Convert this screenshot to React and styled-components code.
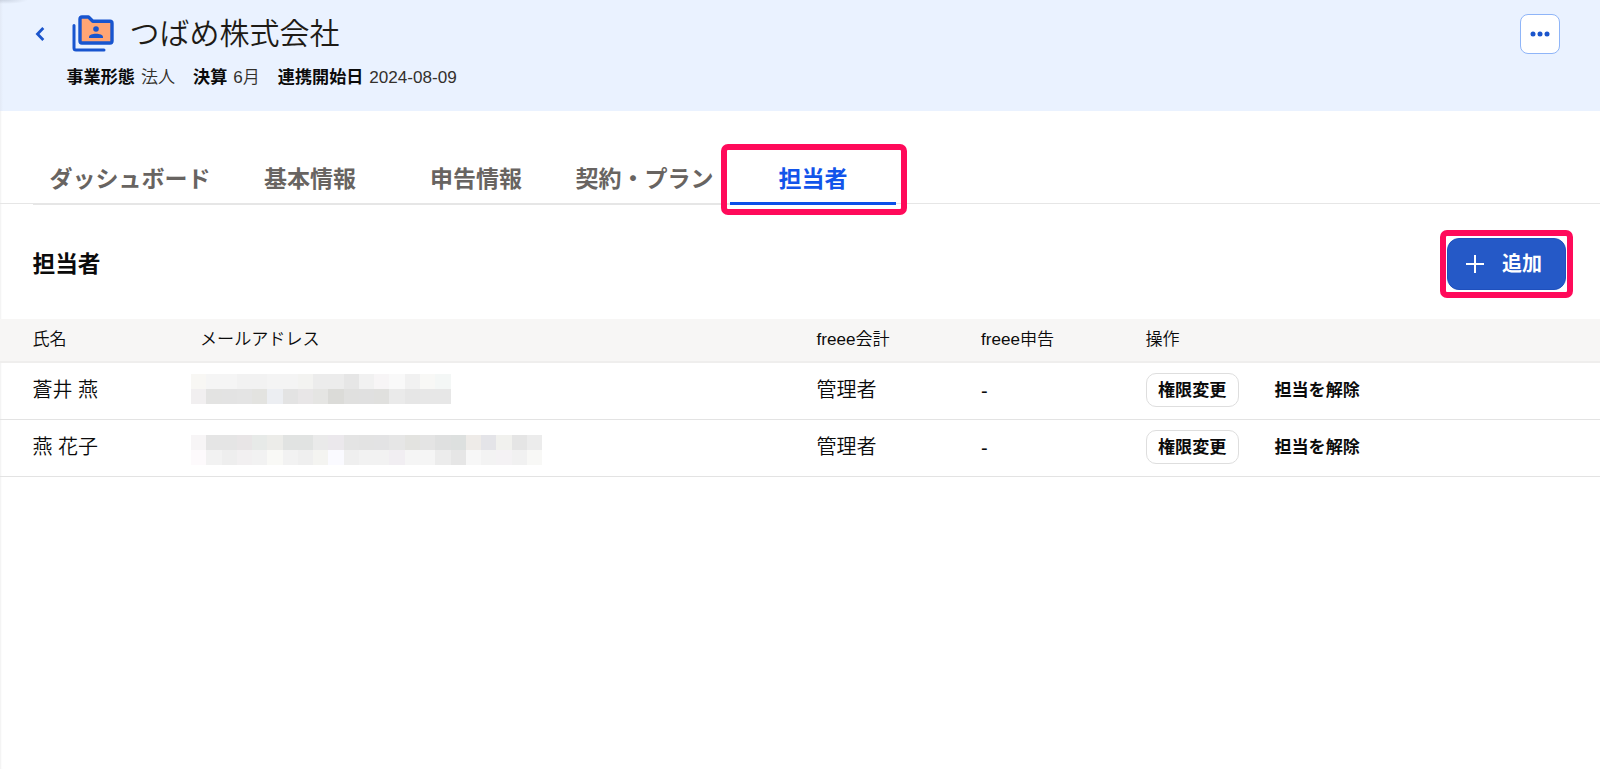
import React from "react";
import styled, { createGlobalStyle } from "styled-components";

const GlobalStyle = createGlobalStyle`
  *, *::before, *::after { box-sizing: border-box; }
  html, body { margin: 0; height: 100%; overflow: hidden; }
  body {
    background: #fff;
    color: #0b0b0b;
    font-family: "Liberation Sans", "Noto Sans CJK JP", sans-serif;
    font-size: 20px;
  }
  button { font: inherit; color: inherit; }
`;

const Page = styled.div`
  display: flex;
  flex-direction: column;
  height: 769px;
  width: 1600px;
  box-shadow: inset 2px 0 2px -1px rgba(0, 0, 0, 0.06);
`;

const Header = styled.header`
  display: flex;
  justify-content: space-between;
  height: 111px;
  padding: 14px 40px 0 34px;
  background:
    radial-gradient(ellipse 24px 4px at 4px 0, rgba(90, 100, 120, 0.2), transparent),
    linear-gradient(90deg, #e3eaf6, transparent 3px),
    #eaf2ff;
`;

const TitleRow = styled.div`
  display: flex;
  align-items: center;
  height: 40px;
`;

const BackButton = styled.button`
  display: flex;
  padding: 0;
  border: 0;
  background: none;
`;

const FolderIcon = styled.svg`
  margin: 0 0 2px 24.5px;
`;

const Title = styled.h1`
  margin: 0 0 1px 15px;
  font-size: 30px;
  font-weight: 350;
  line-height: 40px;
  color: #1e1b16;
`;

const Facts = styled.dl`
  display: flex;
  gap: 18px;
  margin: 12px 0 0 32.5px;
  font-size: 17.1px;
  line-height: 24px;
`;

const Fact = styled.div`
  display: flex;
  gap: 6px;
  dt { font-weight: 700; }
  dd { margin: 0; font-weight: 350; color: #33302c; }
`;

const MoreButton = styled.button`
  display: flex;
  align-items: center;
  justify-content: center;
  width: 40px;
  height: 40px;
  padding: 0;
  border: 1px solid #8fb5f8;
  border-radius: 8px;
  background: #fff;
`;

const TabBar = styled.nav`
  display: flex;
  height: 93px;
  padding: 47px 0 0 33px;
  border-bottom: 1px solid #e6e6e6;
`;

const Tab = styled.a`
  position: relative;
  display: flex;
  justify-content: center;
  min-width: 166px;
  height: 47px;
  padding: 0 16.5px;
  border-bottom: ${(p) => (p.$active ? "3px solid #0c50e8" : "1px solid #e6e6e6")};
  color: ${(p) => (p.$active ? "#1254ea" : "#686461")};
  font-size: 23px;
  font-weight: 700;
  line-height: 43px;
  white-space: nowrap;
`;

const Highlight = styled.span`
  position: absolute;
  inset: ${(p) => p.$inset};
  border: 6px solid #ff0a5a;
  border-radius: 7px;
  pointer-events: none;
`;

const SectionHead = styled.div`
  display: flex;
  align-items: center;
  justify-content: space-between;
  height: 115px;
  padding: 5px 34px 0 32.5px;
`;

const SectionTitle = styled.h2`
  margin: 0;
  font-size: 22.7px;
  line-height: 32px;
`;

const AddButton = styled.button`
  position: relative;
  display: flex;
  align-items: center;
  gap: 18px;
  width: 119px;
  height: 52px;
  padding: 0 0 0 18px;
  border: 1px solid #1f50bd;
  border-radius: 12px;
  background: #2559c7;
  color: #fff;
  font-weight: 700;
`;

const AddLabel = styled.span`
  padding-bottom: 3px;
`;

const grid = `
  display: grid;
  grid-template-columns: 158.5px 625.5px 164.5px 164.5px 1fr;
  align-items: center;
  padding-left: 32.5px;
`;

const TableHead = styled.div`
  ${grid}
  height: 44px;
  padding-bottom: 6px;
  border-bottom: 2px solid #efeeed;
  background: #f7f6f5;
  font-size: 17.1px;
  font-weight: 350;
`;

const HeadCell = styled.span`
  padding-left: ${(p) => p.$indent || 0}px;
`;

const Row = styled.div`
  ${grid}
  height: 57px;
  padding-bottom: 5px;
  border-bottom: 1px solid #e3e3e3;
  font-weight: 350;
`;

const Cell = styled.span`
  padding-top: ${(p) => p.$drop || 0}px;
`;

const Mosaic = styled.div`
  display: grid;
  grid-template-columns: repeat(${(p) => p.$columns}, 15.27px);
  grid-auto-rows: 15.3px;
  margin-top: ${(p) => p.$shift}px;
`;

const Pixel = styled.i`
  background: ${(p) => p.$tone};
`;

const Actions = styled.div`
  display: flex;
  align-items: center;
  gap: 35.5px;
  margin-top: 3px;
`;

const ActionButton = styled.button`
  height: 34px;
  padding: 0 ${(p) => (p.$outlined ? 11.5 : 0)}px 3px;
  border: ${(p) => (p.$outlined ? "1px solid #dedede" : "0")};
  border-radius: 10px;
  background: #fff;
  font-size: 17.1px;
  font-weight: 700;
`;

const tabs = ["ダッシュボード", "基本情報", "申告情報", "契約・プラン", "担当者"];

const members = [
  {
    name: "蒼井 燕",
    role: "管理者",
    shift: 1,
    columns: 17,
    tones:
      "f8f7f4 f5f5f5 f5f5f5 f2f2f2 f2f2f2 f4f4f4 f4f4f4 f3f3f1 ececec ececec e6e6e6 f1f1f1 f7f5f6 f9f9f9 f1f1f1 f8f8f6 f4f7f6 " +
      "f1eff0 e3e3e2 e3e3e3 e4e4e4 e3e3e0 eceef2 e3e3e3 e8e6e7 e5e5e3 dbdbd8 e0e0df e0e0e0 e0e0de eaeaea e6e6e6 e7e7e7 e7e7e7",
  },
  {
    name: "燕 花子",
    role: "管理者",
    shift: 9,
    columns: 23,
    tones:
      "f7f5f6 e5e5e5 e5e5e5 e8e5e6 e7eae8 ecece9 e1e3e2 e1e3e2 eaeaea ebe8ec e4e4e4 e3e3e3 e3e3e4 e6e6e6 e3e3e0 e4e4e4 dfe0e0 dde0df eeebe8 e4e4e8 f1f1ee e5e5e5 ececec " +
      "fdfafc f2f2f2 eeeeee f2f0f1 f2f2f2 f9f9f6 f2f2f2 efefef f4f4f1 fafaff efefef f2f2f2 f2f2f2 f1eef2 f5f5f5 f5f5f5 ececec e6e6e6 f7f7f7 f3f3f3 f4f2f4 f1f1f1 f8f8f6",
  },
];

export default function App() {
  return (
    <Page>
      <GlobalStyle />
      <Header>
        <div>
          <TitleRow>
            <BackButton aria-label="戻る">
              <svg width="12" height="16" viewBox="0 0 12 16" fill="none" stroke="#1b55cc" strokeWidth="2.8">
                <path d="M9.3 2L3.5 8L9.3 14" />
              </svg>
            </BackButton>
            <FolderIcon width="44" height="38" viewBox="0 0 44 38" fill="none" stroke="#1855cf" strokeLinecap="round" strokeLinejoin="round">
              <path d="M3 11.5V34Q3 36 5 36H33" strokeWidth="3" />
              <path d="M9 5Q9 3 11 3H17.5L21.8 7.2H39Q41 7.2 41 9.2V27Q41 29 39 29H11Q9 29 9 27Z" fill="#ffa574" strokeWidth="3.4" />
              <circle cx="25" cy="15" r="2.8" fill="#1855cf" stroke="none" />
              <path d="M18 24V23C18 18.8 32 18.8 32 23V24Z" fill="#1855cf" stroke="none" />
            </FolderIcon>
            <Title>つばめ株式会社</Title>
          </TitleRow>
          <Facts>
            <Fact><dt>事業形態</dt><dd>法人</dd></Fact>
            <Fact><dt>決算</dt><dd>6月</dd></Fact>
            <Fact><dt>連携開始日</dt><dd>2024-08-09</dd></Fact>
          </Facts>
        </div>
        <MoreButton aria-label="メニュー">
          <svg width="20" height="6" viewBox="0 0 20 6" fill="#1b55cc">
            <circle cx="3" cy="3" r="2.5" />
            <circle cx="10" cy="3" r="2.5" />
            <circle cx="17" cy="3" r="2.5" />
          </svg>
        </MoreButton>
      </Header>
      <TabBar>
        {tabs.map((label, i) => {
          const active = i === tabs.length - 1;
          return (
            <Tab key={label} $active={active}>
              {label}
              {active && <Highlight $inset="-14px -11px -13px -9px" />}
            </Tab>
          );
        })}
      </TabBar>
      <SectionHead>
        <SectionTitle>担当者</SectionTitle>
        <AddButton>
          <svg width="18" height="18" viewBox="0 0 18 18" stroke="#fff" strokeWidth="2">
            <path d="M9 0V18M0 9H18" />
          </svg>
          <AddLabel>追加</AddLabel>
          <Highlight $inset="-9px -8px -9px -8px" />
        </AddButton>
      </SectionHead>
      <TableHead>
        <HeadCell>氏名</HeadCell>
        <HeadCell $indent={9}>メールアドレス</HeadCell>
        <HeadCell>freee会計</HeadCell>
        <HeadCell>freee申告</HeadCell>
        <HeadCell>操作</HeadCell>
      </TableHead>
      {members.map((m) => (
        <Row key={m.name}>
          <Cell>{m.name}</Cell>
          <Mosaic $columns={m.columns} $shift={m.shift}>
            {m.tones.split(" ").map((tone, i) => (
              <Pixel key={i} $tone={`#${tone}`} />
            ))}
          </Mosaic>
          <Cell>{m.role}</Cell>
          <Cell $drop={5}>-</Cell>
          <Actions>
            <ActionButton $outlined>権限変更</ActionButton>
            <ActionButton>担当を解除</ActionButton>
          </Actions>
        </Row>
      ))}
    </Page>
  );
}
